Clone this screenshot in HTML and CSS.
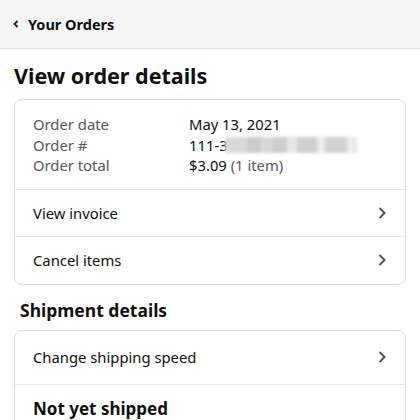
FILE: index.html
```html
<!DOCTYPE html>
<html>
<head>
<meta charset="utf-8">
<link rel="stylesheet" href="styles.css">
</head>
<body>
<header class="topbar">
  <svg class="back" width="8" height="10" viewBox="0 0 8 10"><path d="M5.5 2 L2.5 5 L5.5 8" fill="none" stroke="#222" stroke-width="1.8"/></svg>
  <span class="topbar-title">Your Orders</span>
</header>
<main class="page">
  <h1 class="title">View order details</h1>
  <section class="card">
    <div class="summary">
      <div class="kv"><span class="k">Order date</span><span class="v">May 13, 2021</span></div>
      <div class="kv"><span class="k">Order #</span><span class="v">111-3<span class="blur"><i class="s1"></i><i class="s2"></i><i class="s3"></i><i class="s4"></i><i class="s5"></i><i class="s6"></i><i class="s7"></i><i class="s8"></i><i class="s9"></i></span></span></div>
      <div class="kv"><span class="k">Order total</span><span class="v">$3.09 <span class="muted">(1 item)</span></span></div>
    </div>
    <div class="row"><span>View invoice</span><svg class="chev" width="10" height="14" viewBox="0 0 10 14"><path d="M2.5 2 L7.5 7 L2.5 12" fill="none" stroke="#555" stroke-width="2"/></svg></div>
    <div class="row"><span>Cancel items</span><svg class="chev" width="10" height="14" viewBox="0 0 10 14"><path d="M2.5 2 L7.5 7 L2.5 12" fill="none" stroke="#555" stroke-width="2"/></svg></div>
  </section>
  <h2 class="subtitle">Shipment details</h2>
  <section class="card">
    <div class="row tall"><span>Change shipping speed</span><svg class="chev" width="10" height="14" viewBox="0 0 10 14"><path d="M2.5 2 L7.5 7 L2.5 12" fill="none" stroke="#555" stroke-width="2"/></svg></div>
    <div class="row bold-row"><span>Not yet shipped</span></div>
  </section>
</main>
</body>
</html>
```
FILE: styles.css
```css
* { box-sizing: border-box; }
html, body { margin: 0; padding: 0; background: #fff; }
body { font-family: "Noto Sans", "Open Sans", sans-serif; color: #0f1111; }
.topbar {
  height: 49px;
  background: #f5f5f5;
  border-bottom: 1px solid #e3e3e3;
  display: flex;
  align-items: center;
  padding-left: 12px;
  gap: 8px;
}
.back { display: block; }
.topbar-title { font-weight: 700; font-size: 14.5px; }
.page { padding: 0 14px; }
.title { font-size: 21.5px; font-weight: 700; margin: 12px 0 0 0; line-height: 30px; }
.card {
  border: 1px solid #dcdcdc;
  border-radius: 8px;
  margin-top: 8px;
  overflow: hidden;
}
.summary { padding: 14px 18px 13px 18px; border-bottom: 1px solid #e7e7e7; }
.kv { display: flex; font-size: 14.8px; line-height: 20.5px; }
.k { width: 156px; color: #565959; }
.v { color: #0f1111; display: flex; align-items: center; white-space: pre; }
.muted { color: #565959; }
.blur { display: inline-flex; height: 16px; margin-left: -3px; filter: blur(1.5px); background: #e4e4e4; }
.blur i { display: block; height: 100%; background: #e2e2e2; }
.blur .s1 { width: 22px; background: #dadada; }
.blur .s2 { width: 14px; background: #cbcbcb; }
.blur .s3 { width: 12px; background: #d8d8d8; }
.blur .s4 { width: 14px; background: #cdcdcd; }
.blur .s5 { width: 10px; background: #e6e6e6; }
.blur .s6 { width: 20px; background: #cfcfcf; }
.blur .s7 { width: 8px; background: #ececec; }
.blur .s8 { width: 22px; background: #d2d2d2; }
.blur .s9 { width: 11px; background: #ececec; }
.row {
  display: flex;
  align-items: center;
  justify-content: space-between;
  height: 47px;
  padding: 0 18px;
  font-size: 14.8px;
  border-bottom: 1px solid #e7e7e7;
}
.row:last-child { border-bottom: none; }
.row.tall { height: 54px; }
.chev { display: block; }
.subtitle { font-size: 17.5px; font-weight: 700; margin: 13px 0 0 6px; line-height: 24px; }
.bold-row { font-size: 17px; font-weight: 700; height: auto; padding-top: 12px; padding-bottom: 12px; line-height: 24px; }
```
